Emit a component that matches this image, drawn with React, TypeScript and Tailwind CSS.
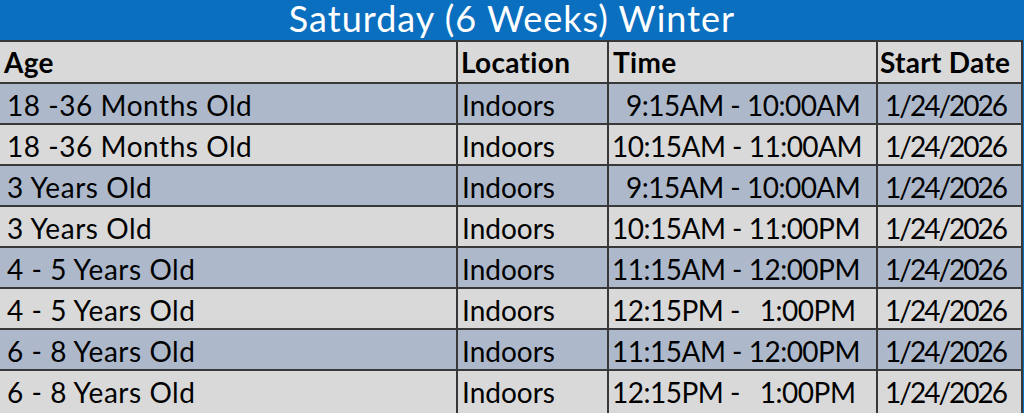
const rows = [
  { age: "18 -36 Months Old", loc: "Indoors", time: "9:15AM - 10:00AM", indent: true, date: "1/24/2026", shade: true },
  { age: "18 -36 Months Old", loc: "Indoors", time: "10:15AM - 11:00AM", indent: false, date: "1/24/2026", shade: false },
  { age: "3 Years Old", loc: "Indoors", time: "9:15AM - 10:00AM", indent: true, date: "1/24/2026", shade: true },
  { age: "3 Years Old", loc: "Indoors", time: "10:15AM - 11:00PM", indent: false, date: "1/24/2026", shade: false },
  { age: "4 - 5 Years Old", loc: "Indoors", time: "11:15AM - 12:00PM", indent: false, date: "1/24/2026", shade: true },
  { age: "4 - 5 Years Old", loc: "Indoors", time: "12:15PM -   1:00PM", indent: false, date: "1/24/2026", shade: false },
  { age: "6 - 8 Years Old", loc: "Indoors", time: "11:15AM - 12:00PM", indent: false, date: "1/24/2026", shade: true },
  { age: "6 - 8 Years Old", loc: "Indoors", time: "12:15PM -   1:00PM", indent: false, date: "1/24/2026", shade: false },
]

export default function App() {
  return (
    <div
      className="w-[1024px] h-[413px] overflow-hidden bg-[#0b6fbf] text-black"
      style={{ fontFamily: "Lato, 'Open Sans', sans-serif" }}
    >
      {/* Title bar */}
      <div className="h-[40px] flex items-start justify-center pt-[2px] text-white text-[36px] leading-[32px] tracking-[1px]">
        Saturday (6 Weeks) Winter
      </div>

      {/* Schedule table */}
      <div className="grid grid-cols-[456px_149px_267px_143px] gap-[2px] bg-[#383838] pt-[2px] pr-[2px] w-[1023px] text-[28px] leading-none">
        <div className="h-[40px] bg-[#d9d9d9] font-bold flex items-center pl-[4px] tracking-[0.3px]">Age</div>
        <div className="h-[40px] bg-[#d9d9d9] font-bold flex items-center pl-[3px] tracking-[0.3px]">Location</div>
        <div className="h-[40px] bg-[#d9d9d9] font-bold flex items-center pl-[4px] tracking-[0.3px]">Time</div>
        <div className="h-[40px] bg-[#d9d9d9] font-bold flex items-center pl-[2px] tracking-[0.3px]">Start Date</div>

        {rows.map((r, i) => {
          const bg = r.shade ? "bg-[#adb9ca]" : "bg-[#d9d9d9]"
          const h = i === rows.length - 1 ? "h-[44px] items-start pt-[7px]" : "h-[39px] items-center pt-[2px]"
          return [
            <div key={i + "a"} className={`${bg} ${h} flex pl-[7px] tracking-[0.55px]`}>{r.age}</div>,
            <div key={i + "b"} className={`${bg} ${h} flex pl-[4px]`}>{r.loc}</div>,
            <div
              key={i + "c"}
              className={`${bg} ${h} flex whitespace-pre tracking-[-0.5px] ${r.indent ? "pl-[17px]" : "pl-[3px]"}`}
            >
              {r.time}
            </div>,
            <div key={i + "d"} className={`${bg} ${h} flex pl-[7px] tracking-[-2px]`}>{r.date}</div>,
          ]
        })}
      </div>
    </div>
  )
}
